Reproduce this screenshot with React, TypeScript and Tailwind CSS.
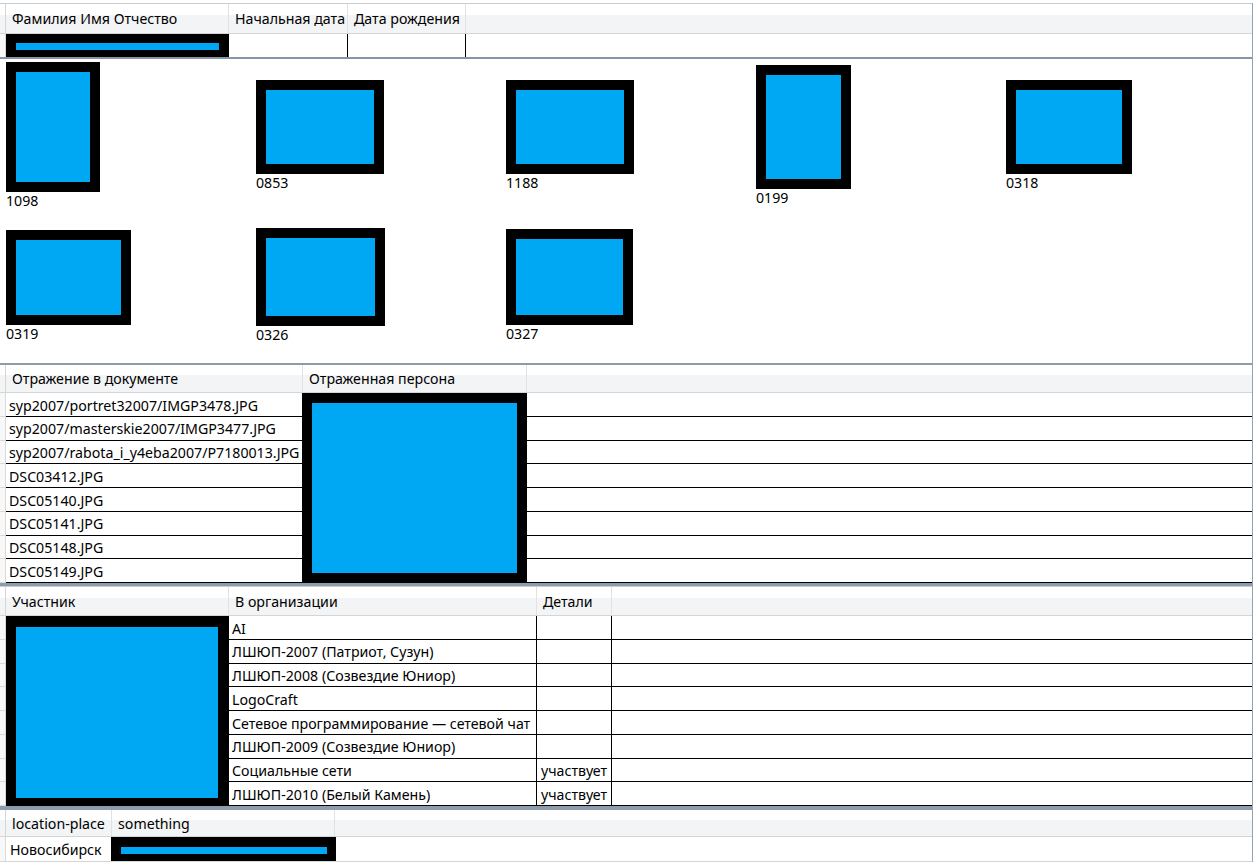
import React from "react";

type Col = { label: string; w: string };

const headerBg =
  "bg-[linear-gradient(to_bottom,#ffffff_0%,#ffffff_38%,#f3f4f6_38%,#f3f4f6_100%)]";

function HeaderRow({ cols, h }: { cols: Col[]; h: string }) {
  return (
    <div className={`flex ${h} shrink-0 border-b border-[#d5d5d5] ${headerBg}`}>
      <div className="w-[6px] shrink-0 border-r border-[#d5d5d5]" />
      {cols.map((c) => (
        <div
          key={c.label}
          className={`${c.w} shrink-0 flex items-center pl-[6px] pt-[1px] border-r border-[#e1e2e4] whitespace-nowrap overflow-hidden`}
        >
          {c.label}
        </div>
      ))}
      <div className="flex-1" />
    </div>
  );
}

function Strip() {
  return <div className="w-[6px] shrink-0 border-r border-b border-[#d9d9d9] bg-[#f8f8f8]" />;
}

function Photo({ w, h }: { w: string; h: string }) {
  return (
    <div className={`${w} ${h} shrink-0 bg-black p-[10px]`}>
      <div className="w-full h-full bg-[#00a8f3]" />
    </div>
  );
}

const row1 = [
  { id: "1098", w: "w-[94px]", h: "h-[130px]" },
  { id: "0853", w: "w-[128px]", h: "h-[94px]" },
  { id: "1188", w: "w-[128px]", h: "h-[94px]" },
  { id: "0199", w: "w-[95px]", h: "h-[124px]" },
  { id: "0318", w: "w-[126px]", h: "h-[94px]" },
];

const row2 = [
  { id: "0319", w: "w-[125px]", h: "h-[95px]" },
  { id: "0326", w: "w-[129px]", h: "h-[98px]" },
  { id: "0327", w: "w-[127px]", h: "h-[96px]" },
];

const docs = [
  "syp2007/portret32007/IMGP3478.JPG",
  "syp2007/masterskie2007/IMGP3477.JPG",
  "syp2007/rabota_i_y4eba2007/P7180013.JPG",
  "DSC03412.JPG",
  "DSC05140.JPG",
  "DSC05141.JPG",
  "DSC05148.JPG",
  "DSC05149.JPG",
];

const orgs = [
  { name: "AI", det: "" },
  { name: "ЛШЮП-2007 (Патриот, Сузун)", det: "" },
  { name: "ЛШЮП-2008 (Созвездие Юниор)", det: "" },
  { name: "LogoCraft", det: "" },
  { name: "Сетевое программирование — сетевой чат", det: "" },
  { name: "ЛШЮП-2009 (Созвездие Юниор)", det: "" },
  { name: "Социальные сети", det: "участвует" },
  { name: "ЛШЮП-2010 (Белый Камень)", det: "участвует" },
];

function Tile({ id, w, h }: { id: string; w: string; h: string }) {
  return (
    <div className="w-[250px] shrink-0 flex flex-col items-start">
      <Photo w={w} h={h} />
      <div className="h-[20px] leading-[17px]">{id}</div>
    </div>
  );
}

export default function App() {
  return (
    <div className="w-[1257px] h-[863px] bg-white pt-[3px] overflow-hidden text-[14.2px] text-black font-['Noto_Sans',sans-serif]">
      <div className="w-[1253px] border-r border-[#94a3b4] flex flex-col">
        {/* persons */}
        <div className="border-t border-[#c6ccd4] border-b-2 border-b-[#8796a7]">
          <HeaderRow
            h="h-[30px]"
            cols={[
              { label: "Фамилия Имя Отчество", w: "w-[223px]" },
              { label: "Начальная дата", w: "w-[119px]" },
              { label: "Дата рождения", w: "w-[118px]" },
            ]}
          />
          <div className="flex h-[23px]">
            <div className="w-[6px] shrink-0 border-r border-[#d9d9d9] bg-[#f8f8f8]" />
            <div className="w-[223px] shrink-0 bg-black pt-[9px] px-[10px]">
              <div className="h-[7px] bg-[#00a8f3]" />
            </div>
            <div className="w-[119px] shrink-0 border-r border-black" />
            <div className="w-[118px] shrink-0 border-r border-black" />
            <div className="flex-1" />
          </div>
        </div>

        {/* photos */}
        <div className="h-[306px] border-b-2 border-[#8d9bac] pt-[3px] pl-[6px]">
          <div className="flex items-center h-[150px]">
            {row1.map((p) => (
              <Tile key={p.id} {...p} />
            ))}
          </div>
          <div className="flex items-center h-[118px] mt-[16px]">
            {row2.map((p) => (
              <Tile key={p.id} {...p} />
            ))}
          </div>
        </div>

        {/* documents */}
        <div className="border-b-[3px] border-[#8d9bac]">
          <HeaderRow
            h="h-[28px]"
            cols={[
              { label: "Отражение в документе", w: "w-[297px]" },
              { label: "Отраженная персона", w: "w-[224px]" },
            ]}
          />
          <div className="flex">
            <div className="flex flex-col">
              {docs.map((d) => (
                <div key={d} className="flex h-[23.75px]">
                  <Strip />
                  <div className="w-[296px] shrink-0 border-b border-black pl-[3px] pt-[2px] flex items-center whitespace-nowrap overflow-hidden">
                    {d}
                  </div>
                </div>
              ))}
            </div>
            <div className="w-[225px] shrink-0 bg-black p-[10px]">
              <div className="w-full h-full bg-[#00a8f3]" />
            </div>
            <div className="flex-1 flex flex-col">
              {docs.map((d) => (
                <div key={d} className="h-[23.75px] border-b border-black" />
              ))}
            </div>
          </div>
        </div>

        {/* organisations */}
        <div className="border-t border-t-[#c6ccd4] border-b-4 border-[#8d9bac]">
          <HeaderRow
            h="h-[29px]"
            cols={[
              { label: "Участник", w: "w-[223px]" },
              { label: "В организации", w: "w-[308px]" },
              { label: "Детали", w: "w-[75px]" },
            ]}
          />
          <div className="flex">
            <div className="flex flex-col">
              {orgs.map((o) => (
                <div key={o.name} className="flex h-[23.75px]">
                  <Strip />
                </div>
              ))}
            </div>
            <div className="w-[223px] shrink-0 bg-black pt-[11px] pl-[10px] pr-[11px] pb-[8px]">
              <div className="w-full h-full bg-[#00a8f3]" />
            </div>
            <div className="flex-1 flex flex-col">
              {orgs.map((o) => (
                <div key={o.name} className="flex h-[23.75px] border-b border-black">
                  <div className="w-[308px] shrink-0 border-r border-black pl-[3px] pt-[2px] flex items-center whitespace-nowrap overflow-hidden">
                    {o.name}
                  </div>
                  <div className="w-[75px] shrink-0 border-r border-black pl-[4px] pt-[2px] flex items-center whitespace-nowrap overflow-hidden">
                    {o.det}
                  </div>
                  <div className="flex-1" />
                </div>
              ))}
            </div>
          </div>
        </div>

        {/* location */}
        <div className="border-b border-[#d5d5d5]">
          <HeaderRow
            h="h-[27px]"
            cols={[
              { label: "location-place", w: "w-[106px]" },
              { label: "something", w: "w-[223px]" },
            ]}
          />
          <div className="flex h-[24px]">
            <div className="w-[6px] shrink-0 border-r border-[#d9d9d9] bg-[#f8f8f8]" />
            <div className="w-[105px] shrink-0 pl-[4px] pt-[2px] flex items-center whitespace-nowrap">
              Новосибирск
            </div>
            <div className="w-[225px] shrink-0 bg-black pt-[10px] pl-[10px] pr-[9px]">
              <div className="h-[7px] bg-[#00a8f3]" />
            </div>
            <div className="flex-1" />
          </div>
        </div>
      </div>
    </div>
  );
}
